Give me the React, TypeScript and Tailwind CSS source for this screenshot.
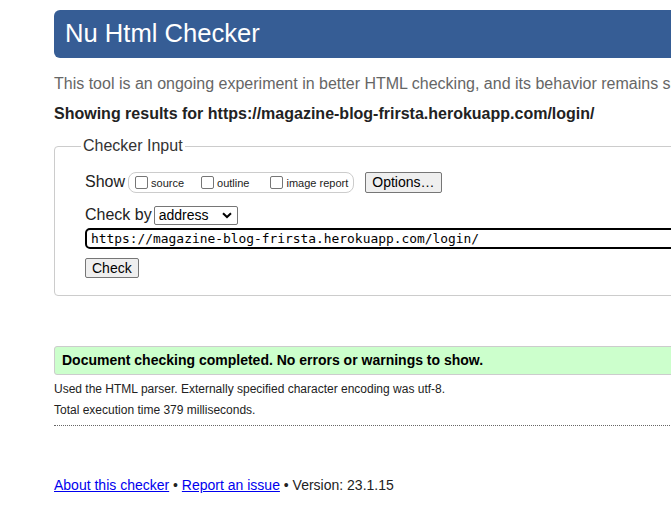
export default function App() {
  return (
    <div className="w-[671px] h-[526px] overflow-hidden bg-white text-[#222] font-['Liberation_Sans',Arial,sans-serif]">
      <div className="w-[780px] ml-[54px] pt-[10px]">
        {/* Header */}
        <div className="h-[48px] rounded-[6px] bg-[#365d95] flex items-center pl-[11px]">
          <h1 className="text-[25.6px] leading-none text-white">Nu Html Checker</h1>
        </div>

        <p className="mt-[16px] text-[16px] leading-[20px] text-[#666] whitespace-nowrap">
          This tool is an ongoing experiment in better HTML checking, and its behavior remains subject to change
        </p>
        <p className="mt-[10px] text-[16px] leading-[20px] font-bold text-[#222] whitespace-nowrap">
          Showing results for https://magazine-blog-frirsta.herokuapp.com/login/
        </p>

        {/* Checker input */}
        <fieldset className="mt-[12px] border border-[#ccc] rounded-[4px] pl-[30px] pb-[15px] pt-[15px]">
          <legend className="-ml-[4px] px-[2px] text-[16px] leading-[20px] text-[#333]">Checker Input</legend>

          <div className="flex items-center h-[22px]">
            <span className="text-[16px] leading-[20px] mr-[3px]">Show</span>
            <div className="flex items-center h-[21px] border border-[#ccc] rounded-[8px] pl-[6px] pr-[5px] text-[11px] leading-none">
              <span className="w-[13px] h-[13px] border border-[#767676] rounded-[2px] bg-white mr-[3px]" />
              <span className="mr-[17px] pt-[2px]">source</span>
              <span className="w-[13px] h-[13px] border border-[#767676] rounded-[2px] bg-white mr-[3px]" />
              <span className="mr-[21px] pt-[2px]">outline</span>
              <span className="w-[13px] h-[13px] border border-[#767676] rounded-[2px] bg-white mr-[3px]" />
              <span className="pt-[2px]">image report</span>
            </div>
            <button className="ml-[11px] h-[21px] px-[6px] text-[14px] leading-none bg-[#efefef] border border-[#767676] rounded-[2px] text-black">
              Options…
            </button>
          </div>

          <div className="flex items-center mt-[12px] h-[20px]">
            <span className="text-[16px] leading-[20px] mr-[2px]">Check by</span>
            <div className="w-[84px] h-[19px] border border-[#767676] rounded-[2px] flex items-center justify-between pl-[4px] pr-[5px] text-[14px] text-black">
              <span>address</span>
              <svg width="10" height="7" viewBox="0 0 10 7">
                <path d="M1 1.2 L5 5 L9 1.2" fill="none" stroke="#000" strokeWidth="2" />
              </svg>
            </div>
          </div>

          <div className="mt-[3px] h-[21px] border-2 border-black rounded-l-[5px] flex items-center pl-[4px] font-['DejaVu_Sans_Mono',monospace] text-[12.9px] text-black">
            https://magazine-blog-frirsta.herokuapp.com/login/
          </div>

          <button className="mt-[9px] h-[20px] px-[6px] text-[14px] leading-none bg-[#efefef] border border-[#767676] rounded-[2px] text-black">
            Check
          </button>
        </fieldset>

        {/* Result */}
        <div className="mt-[50px] h-[29px] bg-[#ccffcc] border border-[#ccc] rounded-[3px] flex items-center pl-[7px]">
          <p className="text-[14px] font-bold text-black">Document checking completed. No errors or warnings to show.</p>
        </div>
        <p className="mt-[6px] text-[12px] leading-[16px]">Used the HTML parser. Externally specified character encoding was utf-8.</p>
        <p className="mt-[5px] text-[12px] leading-[16px]">Total execution time 379 milliseconds.</p>
        <div className="mt-[7px] border-b border-dotted border-[#666]" />

        <p className="mt-[50px] text-[14px] leading-[18px]">
          <a href="#" className="text-[#0000ee] underline">About this checker</a>
          {' • '}
          <a href="#" className="text-[#0000ee] underline">Report an issue</a>
          {' • Version: 23.1.15'}
        </p>
      </div>
    </div>
  )
}
